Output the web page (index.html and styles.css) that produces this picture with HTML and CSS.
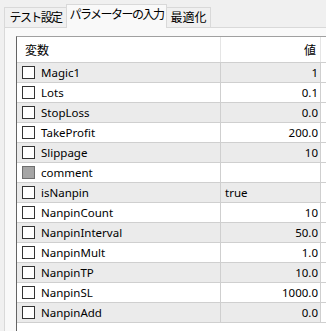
FILE: index.html
```html
<!DOCTYPE html>
<html lang="ja">
<head>
    <meta charset="UTF-8">
    <link rel="stylesheet" href="styles.css">
    <title>パラメーターの入力</title>
</head>
<body>
    <div class="tabs">
        <div class="tab t1">テスト設定</div>
        <div class="tab active">パラメーターの入力</div>
        <div class="tab t3">最適化</div>
    </div>
    <div class="panel">
        <div class="grid">
            <div class="row head">
                <div class="name">変数</div>
                <div class="val">値</div>
                <div class="rest"></div>
            </div>
            <div class="row odd"><div class="name"><span class="box"></span>Magic1</div><div class="val">1</div><div class="rest"></div></div>
            <div class="row"><div class="name"><span class="box"></span>Lots</div><div class="val">0.1</div><div class="rest"></div></div>
            <div class="row odd"><div class="name"><span class="box"></span>StopLoss</div><div class="val">0.0</div><div class="rest"></div></div>
            <div class="row"><div class="name"><span class="box"></span>TakeProfit</div><div class="val">200.0</div><div class="rest"></div></div>
            <div class="row odd"><div class="name"><span class="box"></span>Slippage</div><div class="val">10</div><div class="rest"></div></div>
            <div class="row"><div class="name"><span class="box off"></span>comment</div><div class="val"></div><div class="rest"></div></div>
            <div class="row odd"><div class="name"><span class="box"></span>isNanpin</div><div class="val left">true</div><div class="rest"></div></div>
            <div class="row"><div class="name"><span class="box"></span>NanpinCount</div><div class="val">10</div><div class="rest"></div></div>
            <div class="row odd"><div class="name"><span class="box"></span>NanpinInterval</div><div class="val">50.0</div><div class="rest"></div></div>
            <div class="row"><div class="name"><span class="box"></span>NanpinMult</div><div class="val">1.0</div><div class="rest"></div></div>
            <div class="row odd"><div class="name"><span class="box"></span>NanpinTP</div><div class="val">10.0</div><div class="rest"></div></div>
            <div class="row"><div class="name"><span class="box"></span>NanpinSL</div><div class="val">1000.0</div><div class="rest"></div></div>
            <div class="row odd"><div class="name"><span class="box"></span>NanpinAdd</div><div class="val">0.0</div><div class="rest"></div></div>
        </div>
    </div>
</body>
</html>
```

FILE: styles.css
```css
*
{
    box-sizing: border-box;
    font-family: 'Noto Sans', 'Noto Sans CJK JP', sans-serif;
}
body{margin:0;background:#f0f0f0;color:#000;font-size:11.5px;width:326px;height:331px;overflow:hidden;}
.tabs{display:flex;align-items:flex-end;height:27px;padding-left:4px;}
.tab{height:20px;line-height:19px;text-align:center;border:1px solid #d9d9d9;border-bottom:none;background:#f0f0f0;font-size:12px;letter-spacing:-1.6px;}
.t1{width:62px;border-right:none;}
.t3{width:45px;letter-spacing:0;}
.tab.active{width:101px;height:24px;line-height:20px;background:#f9f9f9;margin-bottom:-1px;margin-right:-1px;position:relative;z-index:1;letter-spacing:-1.5px;}
.panel{margin-left:4px;height:304px;border-top:1px solid #d9d9d9;border-left:1px solid #d9d9d9;background:#f9f9f9;padding:8px 0 0 11px;}
.grid{background:#fff;border-top:1px solid #a0a0a0;border-left:1px solid #646464;height:300px;}
.row{display:flex;height:20px;border-bottom:1px solid #cfcfcf;}
.row.odd{background:#ebebeb;}
.row.head{height:26px;background:#fff;border-bottom:1px solid #cfcfcf;}
.name{width:204px;display:flex;align-items:center;padding-left:5px;border-right:1px solid #cfcfcf;}
.head .name{padding-left:8px;border-right:1px solid #e5e5e5;font-size:12px;}
.val{width:100px;display:flex;align-items:center;justify-content:flex-end;padding-right:2px;border-right:1px solid #cfcfcf;}
.head .val{padding-right:4px;border-right:1px solid #e5e5e5;font-size:12px;}
.val.left{justify-content:flex-start;padding-left:4px;}
.rest{flex:1;background:#fff;}
.box{width:13px;height:13px;border:1px solid #333;background:#fff;margin-right:6px;flex:none;}
.box.off{background:#a5a5a5;border-color:#6d6d6d;}
```
